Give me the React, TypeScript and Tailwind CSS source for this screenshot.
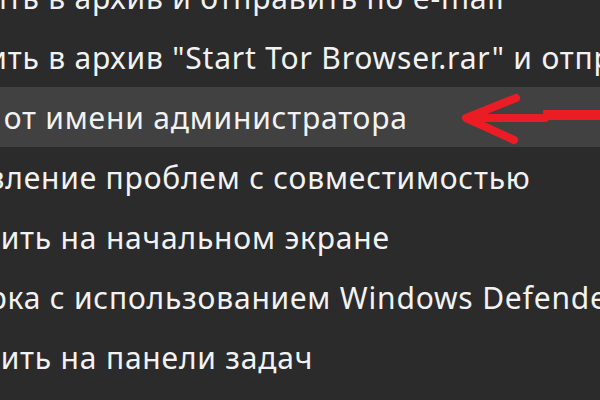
const rows = [
  'Добавить в архив и отправить по e-mail',
  'Добавить в архив "Start Tor Browser.rar" и отправить по e-mail',
  'Запуск от имени администратора',
  'Исправление проблем с совместимостью',
  'Закрепить на начальном экране',
  'Проверка с использованием Windows Defender...',
  'Закрепить на панели задач',
];

function Arrow() {
  return (
    <svg className="absolute left-[455px] top-0" width="145" height="60" viewBox="0 0 145 60" fill="none">
      <g stroke="#ec1c24" strokeWidth="8" strokeLinecap="round" strokeLinejoin="round">
        <polyline points="61,11 11,31 59,53" />
        <line x1="14" y1="31" x2="90" y2="31" />
      </g>
      <rect x="88" y="23" width="60" height="10" fill="#ec1c24" />
    </svg>
  );
}

export default function App() {
  return (
    <div className="w-[600px] h-[400px] overflow-hidden bg-[#2b2b2b] text-[#f2f2f2] font-['Noto_Sans',sans-serif] text-[30px] tracking-[0.8px]">
      <div className="-mt-[33px]">
        {rows.map((label, i) => (
          <div key={i} className={`relative h-[60px] flex items-center ${i === 2 ? 'bg-[#414141]' : ''}`}>
            <span className="-ml-[107px] whitespace-nowrap">{label}</span>
            {i === 2 && <Arrow />}
          </div>
        ))}
      </div>
    </div>
  );
}
